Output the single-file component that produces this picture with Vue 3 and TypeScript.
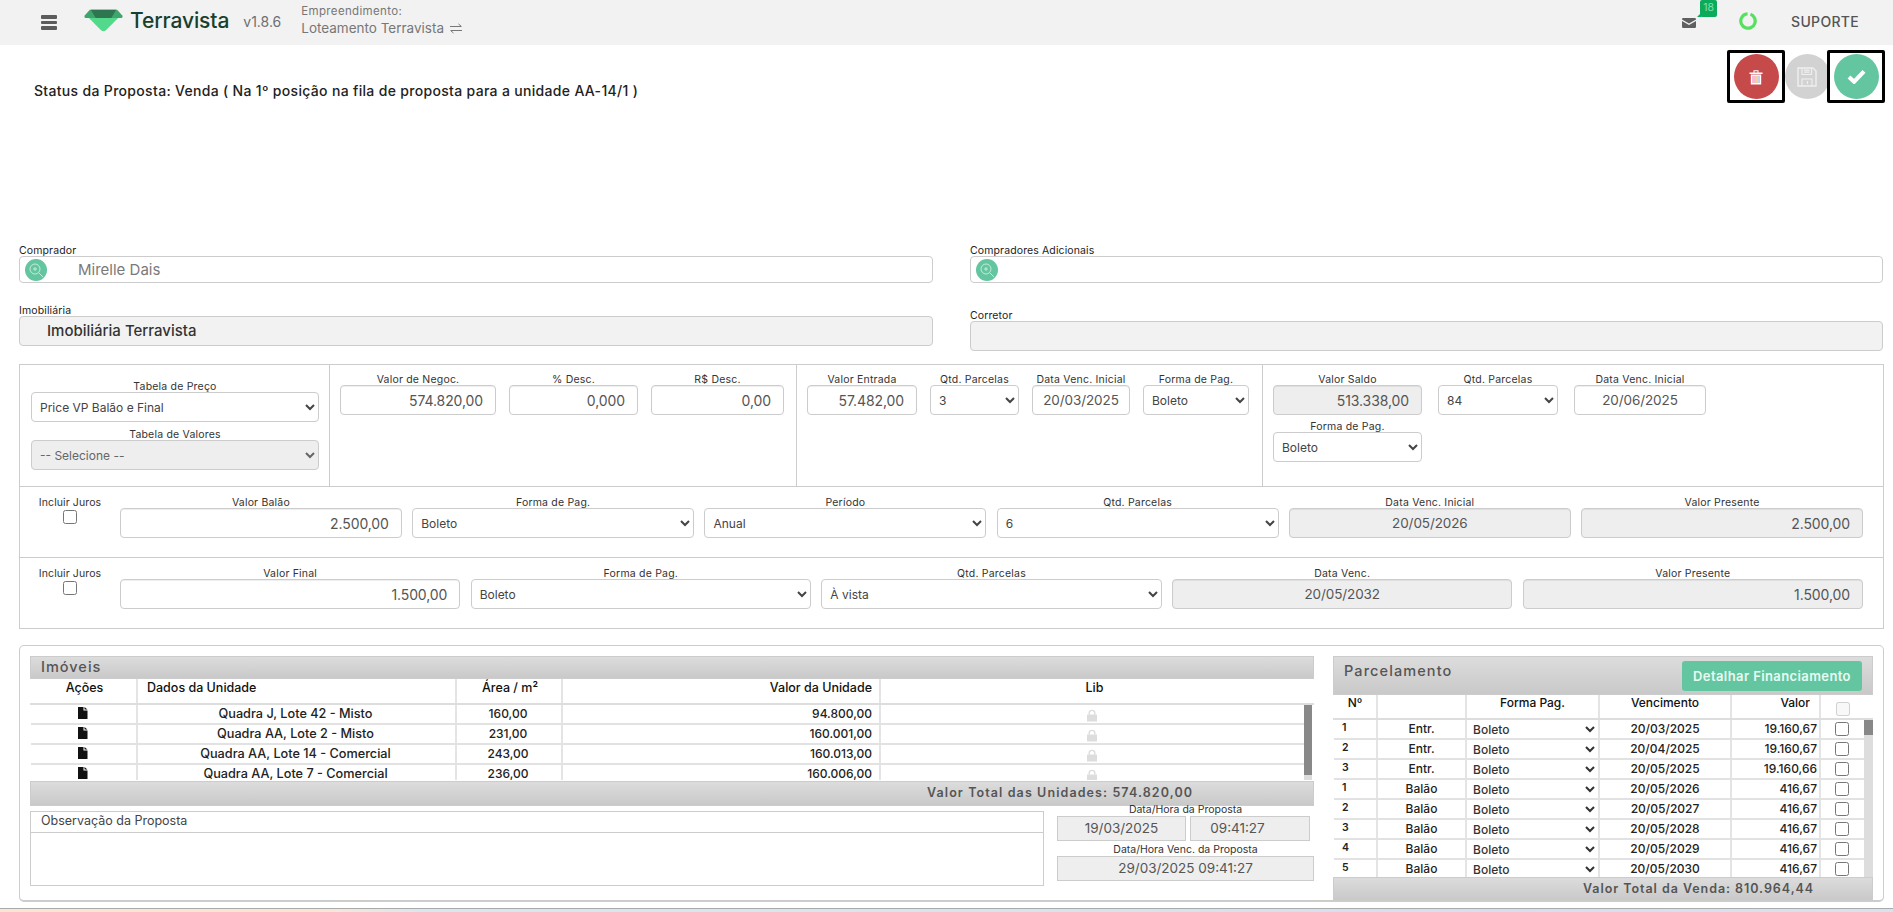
<script setup lang="ts">
interface Unit { name: string; area: string; value: string }
interface Row { n: number; kind: string; due: string; value: string }

const units: Unit[] = [
  { name: 'Quadra J, Lote 42 - Misto', area: '160,00', value: '94.800,00' },
  { name: 'Quadra AA, Lote 2 - Misto', area: '231,00', value: '160.001,00' },
  { name: 'Quadra AA, Lote 14 - Comercial', area: '243,00', value: '160.013,00' },
  { name: 'Quadra AA, Lote 7 - Comercial', area: '236,00', value: '160.006,00' },
]

const rows: Row[] = [
  { n: 1, kind: 'Entr.', due: '20/03/2025', value: '19.160,67' },
  { n: 2, kind: 'Entr.', due: '20/04/2025', value: '19.160,67' },
  { n: 3, kind: 'Entr.', due: '20/05/2025', value: '19.160,66' },
  { n: 1, kind: 'Balão', due: '20/05/2026', value: '416,67' },
  { n: 2, kind: 'Balão', due: '20/05/2027', value: '416,67' },
  { n: 3, kind: 'Balão', due: '20/05/2028', value: '416,67' },
  { n: 4, kind: 'Balão', due: '20/05/2029', value: '416,67' },
  { n: 5, kind: 'Balão', due: '20/05/2030', value: '416,67' },
]
</script>

<template>
  <div class="page">
    <header class="topbar">
      <button class="burger" aria-label="Menu"><span></span><span></span><span></span></button>
      <svg class="logo" viewBox="0 0 40 23" aria-hidden="true">
        <path d="M5 9H35L22.500 21.500Q20 23.500 17.500 21.500Z" fill="#52d98c" />
        <path d="M6 0.500H34L39.500 6.500Q40 9 37.500 9H2.500Q0 9 0.500 6.500Z" fill="#3fa56d" />
        <path d="M7 0.500H33L28 9H12Z" fill="#2e7650" />
      </svg>
      <span class="brand">Terravista</span>
      <span class="version">v1.8.6</span>
      <div class="venture">
        <span class="venture-label">Empreendimento:</span>
        <span class="venture-name">Loteamento Terravista
          <svg class="swap" viewBox="0 0 14 11" aria-hidden="true">
            <path d="M1 3.500H12M9.500 1L12.500 3.500M13 7.500H2M4.500 10L1.500 7.500" fill="none" stroke="#777" stroke-width="1" />
          </svg>
        </span>
      </div>
      <div class="top-right">
        <div class="mail">
          <svg class="mail-icon" viewBox="0 0 14 10" aria-hidden="true">
            <path d="M0 1.200Q0 0 1.200 0H12.800Q14 0 14 1.200V1.600L7 5.600L0 1.600Z" fill="#5f5f5f" />
            <path d="M0 3L7 7L14 3V8.800Q14 10 12.800 10H1.200Q0 10 0 8.800Z" fill="#5f5f5f" />
          </svg>
          <span class="badge">18</span>
        </div>
        <svg class="ring" viewBox="0 0 18 18" aria-hidden="true">
          <circle cx="9" cy="9" r="7.200" fill="none" stroke="#55e05f" stroke-width="3.200" stroke-dasharray="42 3.200" transform="rotate(-70 9 9)" />
        </svg>
        <span class="support">SUPORTE</span>
      </div>
    </header>

    <main class="content">
      <section class="status-row">
        <p class="status">Status da Proposta: Venda ( Na 1º posição na fila de proposta para a unidade AA-14/1 )</p>
        <div class="actions">
          <span class="focus-box">
            <button class="round red" aria-label="Excluir">
              <svg viewBox="0 0 16 16" class="act-icon" aria-hidden="true">
                <path d="M1.500 3.500H14.500V5H1.500ZM5.500 3.500V1.200H10.500V3.500H9.500V2.200H6.500V3.500Z" fill="#fff" />
                <path d="M2.800 5.500H13.200V15.500H2.800Z" fill="#fff" />
                <path d="M5 6.800V14M7 6.800V14" stroke="#ef7bb0" stroke-width="1" />
                <path d="M9 6.800V14" stroke="#e8a83c" stroke-width="1" />
                <path d="M11 6.800V14" stroke="#9aa0d8" stroke-width="1" />
              </svg>
            </button>
          </span>
          <button class="round gray" aria-label="Salvar">
            <svg viewBox="0 0 20 20" class="save-icon" aria-hidden="true">
              <path d="M1 1H16L19 4V19H1Z" fill="none" stroke="#efefef" stroke-width="1.400" />
              <path d="M5 1V7.500H14.500V1M7 3.200H12.500M7 5.200H12.500M5 19V12H15V19M10.500 14V17" fill="none" stroke="#efefef" stroke-width="1.200" />
            </svg>
          </button>
          <span class="focus-box">
            <button class="round green" aria-label="Aprovar">
              <svg viewBox="0 0 20 16" class="check-icon" aria-hidden="true">
                <path d="M2 8.500L7.500 13.500L18 2.500" fill="none" stroke="#fff" stroke-width="4.400" />
              </svg>
            </button>
          </span>
        </div>
      </section>

      <section class="parties">
        <div class="party">
          <label class="party-label">Comprador</label>
          <div class="search-field">
            <span class="search-btn">
              <svg viewBox="0 0 22 22" aria-hidden="true">
                <circle cx="10" cy="10" r="5" fill="none" stroke="#cdeee0" stroke-width="0.900" />
                <path d="M10 8V12M8 10H12M14 14L18 18" fill="none" stroke="#cdeee0" stroke-width="0.900" />
              </svg>
            </span>
            <span class="search-value">Mirelle Dais</span>
          </div>
        </div>
        <div class="party">
          <label class="party-label">Compradores Adicionais</label>
          <div class="search-field">
            <span class="search-btn">
              <svg viewBox="0 0 22 22" aria-hidden="true">
                <circle cx="10" cy="10" r="5" fill="none" stroke="#cdeee0" stroke-width="0.900" />
                <path d="M10 8V12M8 10H12M14 14L18 18" fill="none" stroke="#cdeee0" stroke-width="0.900" />
              </svg>
            </span>
          </div>
        </div>
        <div class="party">
          <label class="party-label">Imobiliária</label>
          <div class="locked-field strong">Imobiliária Terravista</div>
        </div>
        <div class="party lower">
          <label class="party-label">Corretor</label>
          <div class="locked-field"></div>
        </div>
      </section>

      <section class="terms">
        <div class="terms-top">
          <div class="col price">
            <div class="field"><label>Tabela de Preço</label>
              <select><option>Price VP Balão e Final</option></select></div>
            <div class="field"><label>Tabela de Valores</label>
              <select disabled><option>-- Selecione --</option></select></div>
          </div>
          <div class="col nego">
            <div class="field"><label>Valor de Negoc.</label><input class="num" value="574.820,00" /></div>
            <div class="field"><label>% Desc.</label><input class="num" value="0,000" /></div>
            <div class="field"><label>R$ Desc.</label><input class="num" value="0,00" /></div>
          </div>
          <div class="col entry">
            <div class="field"><label>Valor Entrada</label><input class="num" value="57.482,00" /></div>
            <div class="field"><label>Qtd. Parcelas</label><select><option>3</option></select></div>
            <div class="field"><label>Data Venc. Inicial</label><input class="mid" value="20/03/2025" /></div>
            <div class="field"><label>Forma de Pag.</label><select><option>Boleto</option></select></div>
          </div>
          <div class="col balance">
            <div class="field"><label>Valor Saldo</label><input class="num" disabled value="513.338,00" /></div>
            <div class="field"><label>Qtd. Parcelas</label><select><option>84</option></select></div>
            <div class="field"><label>Data Venc. Inicial</label><input class="mid" value="20/06/2025" /></div>
            <div class="field"><label>Forma de Pag.</label><select><option>Boleto</option></select></div>
          </div>
        </div>

        <div class="terms-row">
          <div class="juros"><label>Incluir Juros</label><input type="checkbox" class="check" /></div>
          <div class="cells six">
            <div class="field"><label>Valor Balão</label><input class="num" value="2.500,00" /></div>
            <div class="field"><label>Forma de Pag.</label><select><option>Boleto</option></select></div>
            <div class="field"><label>Período</label><select><option>Anual</option></select></div>
            <div class="field"><label>Qtd. Parcelas</label><select><option>6</option></select></div>
            <div class="field"><label>Data Venc. Inicial</label><input class="mid" disabled value="20/05/2026" /></div>
            <div class="field"><label>Valor Presente</label><input class="num" disabled value="2.500,00" /></div>
          </div>
        </div>

        <div class="terms-row">
          <div class="juros"><label>Incluir Juros</label><input type="checkbox" class="check" /></div>
          <div class="cells five">
            <div class="field"><label>Valor Final</label><input class="num" value="1.500,00" /></div>
            <div class="field"><label>Forma de Pag.</label><select><option>Boleto</option></select></div>
            <div class="field"><label>Qtd. Parcelas</label><select><option>À vista</option></select></div>
            <div class="field"><label>Data Venc.</label><input class="mid" disabled value="20/05/2032" /></div>
            <div class="field"><label>Valor Presente</label><input class="num" disabled value="1.500,00" /></div>
          </div>
        </div>
      </section>

      <section class="lower-box">
        <div class="left-side">
          <div class="units">
            <div class="band title-band">Imóveis</div>
            <div class="units-head">
              <span class="center">Ações</span>
              <span>Dados da Unidade</span>
              <span class="center">Área / m²</span>
              <span class="right">Valor da Unidade</span>
              <span class="center lib">Lib</span>
            </div>
            <div class="scroll-area units-area">
              <div class="units-list">
                <div v-for="u in units" :key="u.name" class="units-row">
                  <span class="center">
                    <svg class="doc" viewBox="0 0 10 12" aria-hidden="true">
                      <path d="M0 0H5.500V3.500H9.500V12H0ZM6.500 0L9.500 2.600H6.500Z" fill="#111" />
                    </svg>
                  </span>
                  <span class="center strong-cell name">{{ u.name }}</span>
                  <span class="center strong-cell">{{ u.area }}</span>
                  <span class="right strong-cell">{{ u.value }}</span>
                  <span class="center">
                    <svg class="lock" viewBox="0 0 12 13" aria-hidden="true">
                      <path d="M2.500 5.500V3.800Q2.500 .7 6 .7T9.500 3.800V5.500H8V3.800Q8 2 6 2T4 3.800V5.500Z" fill="#ddd" />
                      <path d="M1 5.500H11V12.500H1Z" fill="#ddd" />
                    </svg>
                  </span>
                </div>
              </div>
              <div class="track units-track"><div class="thumb"></div></div>
            </div>
            <div class="band total-band">Valor Total das Unidades: 574.820,00</div>
          </div>

          <div class="below-units">
            <div class="notes">
              <div class="notes-title">Observação da Proposta</div>
              <div class="notes-body"></div>
            </div>
            <div class="stamps">
              <div class="stamp-label">Data/Hora da Proposta</div>
              <div class="stamp-pair">
                <span class="stamp">19/03/2025</span>
                <span class="stamp time">09:41:27</span>
              </div>
              <div class="stamp-label second">Data/Hora Venc. da Proposta</div>
              <span class="stamp full">29/03/2025 09:41:27</span>
            </div>
          </div>
        </div>

        <div class="plan">
          <div class="band plan-band">
            <span class="plan-title">Parcelamento</span>
            <button class="detail">Detalhar Financiamento</button>
          </div>
          <div class="plan-head">
            <span class="center">Nº</span>
            <span></span>
            <span class="center">Forma Pag.</span>
            <span class="center">Vencimento</span>
            <span class="right pad">Valor</span>
            <span class="center"><input type="checkbox" class="check" disabled /></span>
          </div>
          <div class="scroll-area plan-area">
            <div class="plan-list">
              <div v-for="(r, i) in rows" :key="i" class="plan-row">
                <span class="no">{{ r.n }}</span>
                <span class="center strong-cell">{{ r.kind }}</span>
                <span class="sel"><select><option>Boleto</option></select></span>
                <span class="center strong-cell">{{ r.due }}</span>
                <span class="right strong-cell tight">{{ r.value }}</span>
                <span class="center"><input type="checkbox" class="check" /></span>
              </div>
            </div>
            <div class="track plan-track"><div class="thumb"></div></div>
          </div>
          <div class="band plan-total"><span>Valor Total da Venda: 810.964,44</span></div>
        </div>
      </section>
    </main>
    <div class="strip"></div>
  </div>
</template>

<style>
html, body { margin: 0; background: #fff; }
</style>

<style scoped>
.page {
  width: 1893px;
  height: 912px;
  overflow: hidden;
  font-family: Inter, "Open Sans", "Liberation Sans", sans-serif;
  color: #333;
  background: #fff;
  display: flex;
  flex-direction: column;
}
.topbar {
  height: 45px;
  flex: none;
  background: #f2f2f2;
  display: flex;
  align-items: center;
}
.burger {
  border: 0;
  background: none;
  padding: 0;
  margin-left: 41px;
  width: 16px;
  display: flex;
  flex-direction: column;
  gap: 2px;
}
.burger span { display: block; height: 3.600px; background: #5c5c5c; border-radius: 1px; }
.logo { width: 39px; height: 23px; margin-left: 27px; margin-bottom: 4px; }
.brand {
  margin-left: 7px;
  font-size: 21px;
  font-weight: 500;
  color: #17402e;
  letter-spacing: -0.1px;
  margin-bottom: 4px;
}
.version { margin-left: 14px; font-size: 14px; color: #6f6f6f; margin-bottom: 2px; }
.venture { margin-left: 20px; display: flex; flex-direction: column; gap: 2px; color: #777; margin-bottom: 5px; }
.venture-label { font-size: 11.500px; line-height: 14px; letter-spacing: 0.35px; }
.venture-name { font-size: 13.500px; line-height: 16px; display: flex; align-items: center; gap: 5px; }
.swap { width: 14px; height: 11px; }
.top-right { margin-left: auto; display: flex; align-items: center; padding-right: 34px; }
.mail { position: relative; width: 14px; height: 10px; margin-right: 43px; }
.mail-icon { display: block; width: 14px; height: 10px; }
.badge {
  position: absolute;
  left: 18px;
  top: -17.500px;
  width: 17px;
  height: 17px;
  border-radius: 2px;
  background: #0cab5c;
  color: #7fe0ae;
  font-size: 10.500px;
  line-height: 16px;
  text-align: center;
}
.badge::before {
  content: "";
  position: absolute;
  left: -3px;
  bottom: 0;
  width: 0;
  height: 0;
  border-left: 4px solid transparent;
  border-bottom: 4px solid #0cab5c;
}
.ring { width: 18px; height: 18px; margin-right: 34px; margin-bottom: 3px; }
.support { font-size: 14px; font-weight: 500; color: #555; letter-spacing: 0.3px; margin-bottom: 2px; }

.content { flex: 1; display: flex; flex-direction: column; padding: 0 9px 0 19px; min-height: 0; }

.status-row { display: flex; justify-content: space-between; height: 200px; flex: none; }
.status { margin: 39px 0 0 15px; font-size: 14px; font-weight: 500; line-height: 14px; color: #222; letter-spacing: 0.32px; }
.actions { display: flex; align-items: flex-start; margin-top: 5px; margin-right: -1px; }
.focus-box {
  box-sizing: border-box;
  width: 58px;
  height: 53px;
  border: 3px solid #000;
  border-radius: 2px;
  display: flex;
  align-items: center;
  justify-content: center;
  position: relative;
  z-index: 1;
}
.round {
  width: 45px;
  height: 45px;
  flex: none;
  border: 0;
  border-radius: 50%;
  padding: 0;
  display: flex;
  align-items: center;
  justify-content: center;
}
.actions > .round { margin: 4px -2.500px 0 -0.500px; }
.red { background: #c64a4a; }
.gray { background: #d2d2d2; }
.green { background: #64c6a0; }
.act-icon { width: 16px; height: 16px; }
.save-icon { width: 20px; height: 20px; }
.check-icon { width: 19px; height: 15px; }

.parties {
  display: grid;
  grid-template-columns: 914px 913px;
  column-gap: 37px;
  row-gap: 22px;
  height: 119px;
  flex: none;
  align-content: start;
}
.party-label { display: block; font-size: 10.500px; line-height: 11px; color: #222; letter-spacing: 0.12px; }
.party.lower { padding-top: 5px; }
.search-field {
  box-sizing: border-box;
  height: 27px;
  border: 1px solid #ccc;
  border-radius: 4px;
  display: flex;
  align-items: center;
  padding-left: 5px;
}
.search-btn {
  width: 22px;
  height: 22px;
  border-radius: 50%;
  background: #64c6a0;
  flex: none;
  display: flex;
}
.search-btn svg { width: 22px; height: 22px; }
.search-value { margin-left: 31px; font-size: 15px; color: #7a7a7a; }
.locked-field {
  box-sizing: border-box;
  height: 30px;
  border: 1px solid #ccc;
  border-radius: 4px;
  background: #f2f2f2;
  line-height: 27px;
  padding-left: 27px;
}
.locked-field.strong { font-size: 15px; font-weight: 500; color: #333; }

.terms {
  box-sizing: border-box;
  border: 1px solid #ccc;
  height: 265px;
  flex: none;
  display: flex;
  flex-direction: column;
}
.terms-top {
  height: 121px;
  flex: none;
  display: grid;
  grid-template-columns: 309px 467px 466px 1fr;
  border-bottom: 1px solid #ccc;
}
.terms-row {
  height: 71px;
  flex: none;
  box-sizing: border-box;
  display: flex;
  border-bottom: 1px solid #ccc;
  padding: 10px 20px 0 0;
}
.terms-row:last-child { border-bottom: 0; }
.col { border-left: 1px solid #ccc; box-sizing: border-box; display: grid; align-content: start; }
.col:first-child { border-left: 0; }
.price { padding: 16px 10px 0 11px; row-gap: 7px; }
.nego { grid-template-columns: 156px 129px 133px; column-gap: 13px; padding: 9px 0 0 10px; }
.entry { grid-template-columns: 110px 89px 98px 106px; column-gap: 13px; padding: 9px 0 0 10px; }
.balance { grid-template-columns: 149px 120px 132px; column-gap: 16px; row-gap: 6px; padding: 9px 0 0 10px; }

.field { display: flex; flex-direction: column; min-width: 0; }
.field label {
  font-size: 10.500px;
  line-height: 11px;
  height: 11px;
  text-align: center;
  color: #333;
  white-space: nowrap;
  letter-spacing: 0.2px;
}
input:not([type]), select {
  box-sizing: border-box;
  width: 100%;
  height: 30px;
  border: 1px solid #ccc;
  border-radius: 4px;
  background: #fff;
  font-family: inherit;
  color: #555;
  margin: 0;
}
input:not([type]) { font-size: 14px; letter-spacing: -0.1px; padding: 0 12px; box-shadow: inset 0 1px 1px rgba(0, 0, 0, 0.07); }
input.mid { font-size: 13.500px; padding: 0 2px; }
select { font-size: 12px; padding: 0 4px; color: #444; }
select:disabled, input:disabled { background: #eee; opacity: 1; }
input:disabled { color: #555; -webkit-text-fill-color: #555; }
select:disabled { color: #666; }
.num { text-align: right; }
.mid { text-align: center; }

.juros { width: 100px; flex: none; display: flex; flex-direction: column; align-items: center; }
.juros label { font-size: 10.500px; line-height: 11px; color: #333; margin-bottom: 2px; letter-spacing: 0.1px; }
.check { width: 14px; height: 14px; margin: 0; display: block; }
.cells { flex: 1; display: grid; column-gap: 10.400px; }
.six { grid-template-columns: repeat(6, 1fr); }
.five { grid-template-columns: repeat(5, 1fr); }

.lower-box {
  box-sizing: border-box;
  margin-top: 16px;
  height: 257px;
  flex: none;
  border: 1px solid #ccc;
  border-bottom-width: 2px;
  border-radius: 5px;
  display: flex;
  justify-content: space-between;
  padding: 10px 10px 0 10px;
}
.left-side { width: 1284px; flex: none; }
.band {
  background: linear-gradient(#dcdcdc, #c9c9c9);
  color: #555;
  border: 1px solid #ccc;
  box-sizing: border-box;
}
.title-band {
  height: 23px;
  font-size: 14.500px;
  font-weight: 500;
  line-height: 20px;
  padding-left: 10px;
  letter-spacing: 1px;
}
.total-band {
  height: 25px;
  font-size: 12.500px;
  font-weight: 600;
  line-height: 22px;
  padding-left: 896px;
  letter-spacing: 1.100px;
  white-space: nowrap;
  margin-top: 1px;
}
.units-head, .units-row {
  display: grid;
  grid-template-columns: 107px 319px 106px 318px 1fr;
}
.units-head {
  height: 26px;
  box-sizing: border-box;
  font-size: 12.500px;
  font-weight: 500;
  color: #111;
  border-bottom: 2px solid #ddd;
  padding-left: 1px;
}
.units-head span { border-right: 2px solid #e4e4e4; line-height: 18px; padding: 0 7px 0 9px; }
.units-head span:last-child { border-right: 0; }
.units-head .lib { padding-right: 15px; }
.scroll-area { display: flex; }
.units-area { height: 75px; }
.plan-area { height: 157px; flex: none; }
.units-list, .plan-list { flex: 1; min-width: 0; overflow: hidden; padding-left: 1px; }
.track { background: #ddd; flex: none; }
.thumb { background: #888; }
.units-track { width: 8px; margin-right: 2px; }
.units-track .thumb { height: 70px; }
.plan-track { width: 9px; margin-right: 0.500px; }
.plan-track .thumb { height: 15px; }
.units-row {
  height: 20px;
  box-sizing: border-box;
  border-bottom: 2px solid #e2e2e2;
  font-size: 12px;
}
.units-row > span { border-right: 2px solid #e4e4e4; line-height: 18px; padding: 0 7px 0 5px; display: block; white-space: nowrap; overflow: hidden; }
.units-row > span:last-child { border-right: 0; }
.center { text-align: center; }
.right { text-align: right; }
.strong-cell { font-weight: 500; color: #222; }
.name { font-size: 12.700px; }
.doc { width: 10px; height: 12px; display: inline-block; vertical-align: top; margin-top: 2px; }
.lock { width: 12px; height: 13px; display: inline-block; vertical-align: top; margin-top: 4px; }

.below-units { display: flex; justify-content: space-between; margin-top: 5px; }
.notes { width: 1014px; height: 75px; box-sizing: border-box; border: 1px solid #ccc; }
.notes-title {
  height: 21px;
  box-sizing: border-box;
  border-bottom: 1px solid #ccc;
  font-size: 12.500px;
  line-height: 18px;
  padding-left: 10px;
  color: #444;
}
.stamps { width: 257px; margin-top: -6px; display: flex; flex-direction: column; }
.stamp-label { text-align: center; font-size: 10.500px; line-height: 10px; height: 11px; color: #333; }
.stamp-label.second { margin-top: 4px; }
.stamp-pair { display: flex; gap: 4px; }
.stamp {
  box-sizing: border-box;
  height: 25px;
  width: 129px;
  background: #eee;
  border: 1px solid #ccc;
  color: #555;
  font-size: 13.500px;
  line-height: 23px;
  text-align: center;
  display: block;
}
.stamp.time { width: 120px; padding-right: 25px; }
.stamp.full { width: 257px; }

.plan { width: 540px; flex: none; display: flex; flex-direction: column; }
.plan-band {
  height: 39px;
  flex: none;
  display: flex;
  justify-content: space-between;
  padding: 3px 10px 0 10px;
}
.plan-title { font-size: 14.500px; font-weight: 500; letter-spacing: 1.100px; line-height: 22px; }
.detail {
  width: 180px;
  height: 30px;
  margin-top: 1px;
  border: 0;
  border-radius: 3px;
  background: #64c6a0;
  color: #e8fbf2;
  font-family: inherit;
  font-size: 13px;
  font-weight: 600;
  letter-spacing: 0.4px;
  padding: 0;
}
.plan-head, .plan-row {
  display: grid;
  grid-template-columns: 44px 89px 133px 132px 89px 1fr;
}
.plan-head {
  height: 25px;
  flex: none;
  box-sizing: border-box;
  font-size: 12px;
  font-weight: 500;
  color: #111;
  padding-left: 1px;
  border-bottom: 2px solid #ddd;
}
.plan-head > span { border-right: 2px solid #e4e4e4; line-height: 16px; }
.plan-head > span:last-child { border-right: 0; display: flex; justify-content: center; padding: 7px 9px 0 0; box-sizing: border-box; }
.pad { padding-right: 9px; }
.plan-row {
  height: 20px;
  box-sizing: border-box;
  border-bottom: 2px solid #e2e2e2;
  font-size: 12px;
}
.plan-row > span { border-right: 2px solid #e4e4e4; line-height: 18px; white-space: nowrap; overflow: hidden; }
.plan-row > span:last-child { border-right: 0; display: flex; justify-content: center; align-items: center; }
.no { font-size: 10.500px; font-weight: 600; padding-left: 8px; line-height: 15px !important; color: #222; }
.tight { padding-right: 2px; }
.sel { display: block; }
.plan-row select {
  height: 18px;
  border: 0;
  background: transparent;
  font-size: 12px;
  font-weight: 500;
  color: #333;
  display: block;
  border-radius: 0;
  padding: 0 0 0 2px;
}
.plan-total {
  height: 24px;
  flex: none;
  font-size: 12.500px;
  font-weight: 600;
  letter-spacing: 0.950px;
  line-height: 21px;
  padding-left: 249px;
  white-space: nowrap;
}
.strip {
  height: 4px;
  flex: none;
  margin-top: 6px;
  border-top: 1px solid #aaa;
  box-sizing: border-box;
  background: linear-gradient(90deg, #fbe6d6 0, #fbe6d6 320px, #d6e9ee 420px, #d6e6ec 1000px, #d5dff0 1500px, #d9e2ee 1893px);
}
</style>
